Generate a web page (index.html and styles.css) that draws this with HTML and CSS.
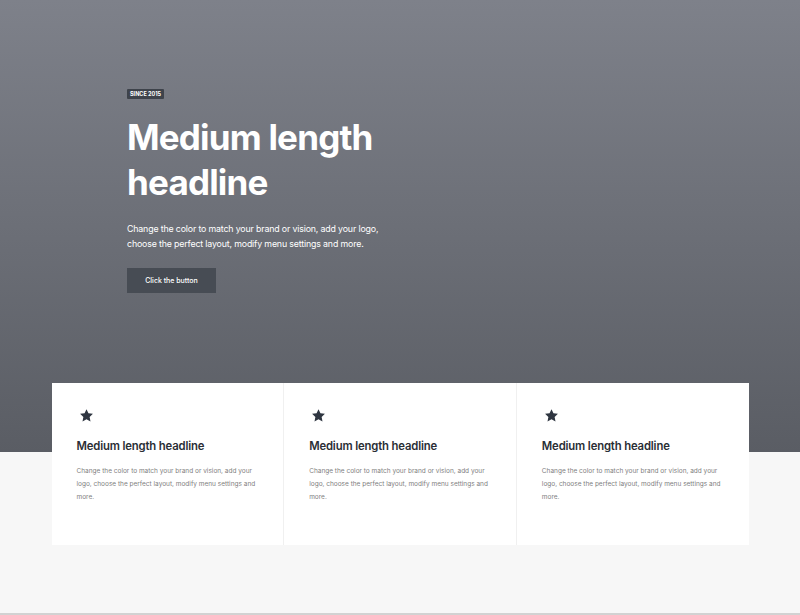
FILE: index.html
```html
<!DOCTYPE html>
<html lang="en">
<head>
<meta charset="utf-8">
<link rel="stylesheet" href="styles.css">
</head>
<body>
<header class="hero">
  <div class="hero-inner">
    <span class="badge">SINCE 2015</span>
    <h1 class="hero-title">Medium length<br>headline</h1>
    <p class="hero-text">Change the color to match your brand or vision, add your logo,<br>choose the perfect layout, modify menu settings and more.</p>
    <a class="btn" href="#">Click the button</a>
  </div>
</header>
<section class="features">
  <div class="card">
    <svg class="star" viewBox="0 0 24 24"><path d="M12 1.8l3.1 6.6 7.2.9-5.3 5 1.4 7.1L12 17.9l-6.4 3.5 1.4-7.1-5.3-5 7.2-.9z"/></svg>
    <h2 class="card-title">Medium length headline</h2>
    <p class="card-text">Change the color to match your brand or vision, add your logo, choose the perfect layout, modify menu settings and more.</p>
  </div>
  <div class="card">
    <svg class="star" viewBox="0 0 24 24"><path d="M12 1.8l3.1 6.6 7.2.9-5.3 5 1.4 7.1L12 17.9l-6.4 3.5 1.4-7.1-5.3-5 7.2-.9z"/></svg>
    <h2 class="card-title">Medium length headline</h2>
    <p class="card-text">Change the color to match your brand or vision, add your logo, choose the perfect layout, modify menu settings and more.</p>
  </div>
  <div class="card">
    <svg class="star" viewBox="0 0 24 24"><path d="M12 1.8l3.1 6.6 7.2.9-5.3 5 1.4 7.1L12 17.9l-6.4 3.5 1.4-7.1-5.3-5 7.2-.9z"/></svg>
    <h2 class="card-title">Medium length headline</h2>
    <p class="card-text">Change the color to match your brand or vision, add your logo, choose the perfect layout, modify menu settings and more.</p>
  </div>
</section>
<div class="spacer"></div>
</body>
</html>
```

FILE: styles.css
```css
* { box-sizing: border-box; }
html, body { margin: 0; padding: 0; }
body {
  background: #f7f7f7;
  font-family: Inter, "Liberation Sans", sans-serif;
  height: 615px;
  overflow: hidden;
  border-bottom: 2px solid #d2d2d2;
}
.hero {
  height: 452px;
  background: linear-gradient(to bottom, #7e818a 0%, #5a5d64 100%);
  padding: 89px 0 0 127px;
}
.hero-inner {
  display: flex;
  flex-direction: column;
  align-items: flex-start;
}
.badge {
  display: inline-block;
  background: #3e434b;
  color: #fff;
  font-size: 5.5px;
  font-weight: 700;
  line-height: 10px;
  padding: 0 3px;
  border-radius: 1px;
}
.hero-title {
  margin: 16px 0 0;
  color: #fff;
  font-size: 35px;
  font-weight: 700;
  line-height: 45px;
  letter-spacing: -0.8px;
}
.hero-text {
  margin: 16px 0 0;
  color: #fff;
  font-size: 8.8px;
  line-height: 15px;
  letter-spacing: -0.15px;
}
.btn {
  margin-top: 17px;
  display: flex;
  align-items: center;
  justify-content: center;
  width: 89px;
  height: 25px;
  background: #474c54;
  color: #fff;
  font-size: 7px;
  font-weight: 500;
  text-decoration: none;
}
.features {
  margin: -69px auto 0;
  width: 697px;
  height: 162px;
  display: flex;
  gap: 1px;
  background: #f0f0f0;
}
.card {
  flex: 1;
  background: #fff;
  padding: 25px 25px 0;
}
.star {
  display: block;
  width: 15px;
  height: 15px;
  margin-left: 2px;
  fill: #2f3641;
}
.card-title {
  margin: 15px 0 0;
  font-size: 11.3px;
  font-weight: 600;
  color: #2a2e35;
  line-height: 16px;
  letter-spacing: -0.15px;
}
.card-text {
  margin: 11px 0 0;
  font-size: 6.5px;
  line-height: 13px;
  color: #808080;
  max-width: 185px;
}
```
